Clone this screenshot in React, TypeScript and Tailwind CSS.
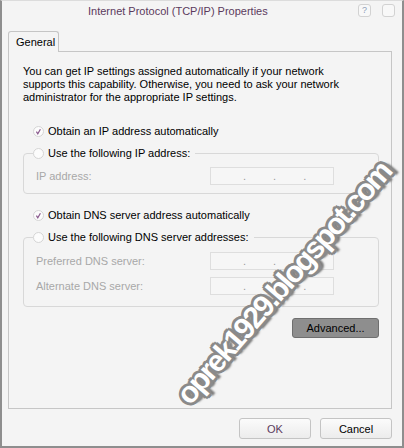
import React from "react";

const Radio = ({ checked }: { checked?: boolean }) => (
  <svg width="11" height="11" viewBox="0 0 11 11" className="shrink-0">
    <circle cx="5.5" cy="5.5" r="5" fill="#fcfcfc" stroke="#d4d4d4" />
    {checked && (
      <path d="M3.4 5.6 L4.8 7.9 L7.4 3.2" fill="none" stroke="#8a5a8e" strokeWidth="1.2" />
    )}
  </svg>
);

const IpField = () => (
  <div className="flex h-[18px] w-[124px] items-center border border-[#dedede] bg-[#f6f6f6] text-[11px] leading-none text-[#9a9a9a]">
    <span className="w-[32px]" />
    <span>.</span>
    <span className="w-[27px]" />
    <span>.</span>
    <span className="w-[27px]" />
    <span>.</span>
  </div>
);

const FieldRow = ({ label }: { label: string }) => (
  <div className="flex h-[18px] items-center pl-[3px]">
    <span className="w-[174px] text-[#a8a8a8]">{label}</span>
    <IpField />
  </div>
);

export default function App() {
  return (
    <div className="relative flex h-[448px] w-[404px] flex-col overflow-hidden border-x-2 border-b-2 border-t border-[#8e8e8e] border-t-[#dcdcdc] bg-[#f4f4f4] font-['Liberation_Sans',Arial,sans-serif] text-[11px] leading-[14px] text-black">
      {/* title bar */}
      <div className="flex h-[30px] items-start pt-[3px]">
        <div className="flex-1 pl-[86px] text-[#5b3a5d]">Internet Protocol (TCP/IP) Properties</div>
        <div className="mr-[7px] flex gap-[11px]">
          <div className="flex h-[13px] w-[13px] items-center justify-center rounded-[3px] border border-[#d2d2d2] bg-[#f8f8f8] text-[9px] leading-none text-[#8fa0b8]">
            ?
          </div>
          <div className="h-[13px] w-[13px] rounded-[3px] border border-[#d2d2d2] bg-[#f8f8f8]" />
        </div>
      </div>

      {/* tab */}
      <div className="relative z-10 -mb-px ml-[6px] flex h-[21px] w-[51px] items-center rounded-t-[3px] border border-b-0 border-[#c5c5c5] bg-[#f4f4f4] pl-[7px]">
        General
      </div>

      {/* panel */}
      <div className="ml-[6px] flex h-[358px] w-[384px] flex-col border border-[#c6c6c6] pl-[14px] pr-[12px] pt-[13px]">
        <p className="leading-[13px]">
          You can get IP settings assigned automatically if your network
          <br />
          supports this capability. Otherwise, you need to ask your network
          <br />
          administrator for the appropriate IP settings.
        </p>

        <div className="mt-[20px] flex items-center gap-[4px] pl-[10px]">
          <Radio checked />
          <span>Obtain an IP address automatically</span>
        </div>

        <fieldset className="mt-[8px] rounded-[4px] border border-[#d8d8d8] px-[9px]">
          <legend className="flex items-center gap-[4px] pr-[5px]">
            <Radio />
            <span>Use the following IP address:</span>
          </legend>
          <div className="pb-[8px] pt-[7px]">
            <FieldRow label="IP address:" />
          </div>
        </fieldset>

        <div className="mt-[14px] flex items-center gap-[4px] pl-[10px]">
          <Radio checked />
          <span>Obtain DNS server address automatically</span>
        </div>

        <fieldset className="mt-[8px] rounded-[4px] border border-[#d8d8d8] px-[9px]">
          <legend className="flex items-center gap-[4px] pr-[5px]">
            <Radio />
            <span>Use the following DNS server addresses:</span>
          </legend>
          <div className="flex flex-col gap-[7px] pb-[11px] pt-[8px]">
            <FieldRow label="Preferred DNS server:" />
            <FieldRow label="Alternate DNS server:" />
          </div>
        </fieldset>

        <button className="mt-[11px] flex h-[20px] w-[87px] items-center justify-center self-end rounded-[3px] border border-[#6f6f6f] bg-[#8e8e8e] text-black">
          Advanced...
        </button>
      </div>

      {/* dialog buttons */}
      <div className="mr-[10px] mt-[9px] flex justify-end gap-[9px]">
        <button className="flex h-[21px] w-[72px] items-center justify-center rounded-[3px] border border-[#c4c4c4] bg-gradient-to-b from-[#fbfbfb] to-[#ececec] text-[#5b3a5d]">
          OK
        </button>
        <button className="flex h-[21px] w-[72px] items-center justify-center rounded-[3px] border border-[#c4c4c4] bg-gradient-to-b from-[#fbfbfb] to-[#ececec]">
          Cancel
        </button>
      </div>

      {/* watermark */}
      <div className="pointer-events-none absolute left-[282px] top-[282px] -translate-x-1/2 -translate-y-1/2 -rotate-[49deg] whitespace-nowrap text-[30px] font-bold leading-none tracking-[-2px] text-white [text-shadow:3px_0_#8a8a8a,-3px_0_#8a8a8a,0_3px_#8a8a8a,0_-3px_#8a8a8a,2px_2px_#8a8a8a,-2px_-2px_#8a8a8a,2px_-2px_#8a8a8a,-2px_2px_#8a8a8a,4px_4px_2px_#7a7a7a]">
        oprek1929.blogspot.com
      </div>
    </div>
  );
}
